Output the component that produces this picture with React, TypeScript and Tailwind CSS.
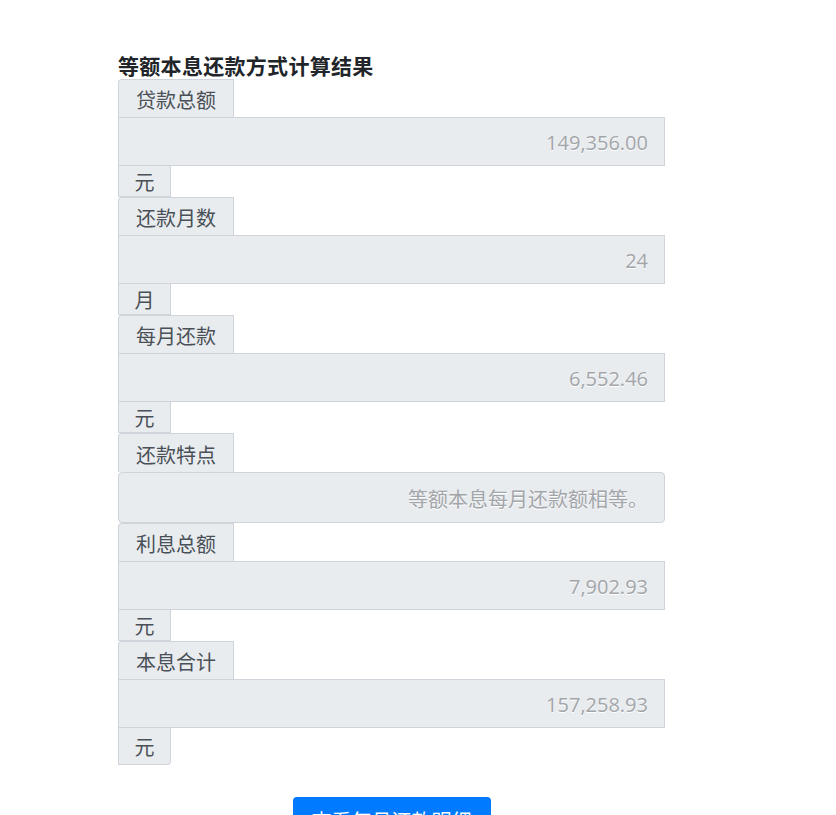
const ROWS = [
  { label: "贷款总额", value: "149,356.00", unit: "元" },
  { label: "还款月数", value: "24", unit: "月" },
  { label: "每月还款", value: "6,552.46", unit: "元" },
  { label: "还款特点", value: "等额本息每月还款额相等。", unit: null },
  { label: "利息总额", value: "7,902.93", unit: "元" },
  { label: "本息合计", value: "157,258.93", unit: "元" },
];

const cjk = "font-['Noto_Sans_CJK_SC',sans-serif]";

export default function App() {
  return (
    <div className="min-h-[815px] bg-white pt-[51px] pl-[118px]">
      <div className="w-[547px]">
        <h3 className={`text-[21px] leading-[28px] font-bold tracking-[0.3px] text-[#212529] ${cjk}`}>
          等额本息还款方式计算结果
        </h3>
        {ROWS.map((r, i) => {
          const last = i === ROWS.length - 1;
          return (
            <div key={r.label} className="flex flex-col items-start">
              <div
                className={`flex w-[116px] items-center justify-center rounded-tl-[4px] border border-b-0 border-[#ced4da] bg-[#e9ecef] pt-[3px] text-[20px] text-[#495057] ${cjk} ${
                  r.unit ? "h-[38px]" : "h-[39px]"
                }`}
              >
                {r.label}
              </div>
              <div
                className={`flex w-full items-center justify-end border border-[#ced4da] bg-[#e9ecef] pt-[3px] pr-[16px] text-[20px] text-[#a2a5a9] [text-shadow:0_1px_0_#fff] ${
                  r.unit ? "h-[49px]" : "h-[51px] rounded-[4px]"
                } ${r.unit ? "font-['Open_Sans','Noto_Sans_CJK_SC',sans-serif]" : cjk}`}
              >
                {r.value}
              </div>
              {r.unit && (
                <div
                  className={`flex w-[53px] items-center justify-center border border-t-0 border-[#ced4da] bg-[#e9ecef] pt-[2px] text-[20px] text-[#495057] ${cjk} ${
                    last ? "h-[37px] rounded-br-[4px]" : "h-[31px]"
                  }`}
                >
                  {r.unit}
                </div>
              )}
            </div>
          );
        })}
        <div className="mt-[32px] flex justify-center">
          <button
            className={`h-[48px] rounded-[4px] bg-[#007bff] px-[19px] text-[20px] text-white ${cjk}`}
          >
            查看每月还款明细
          </button>
        </div>
      </div>
    </div>
  );
}
